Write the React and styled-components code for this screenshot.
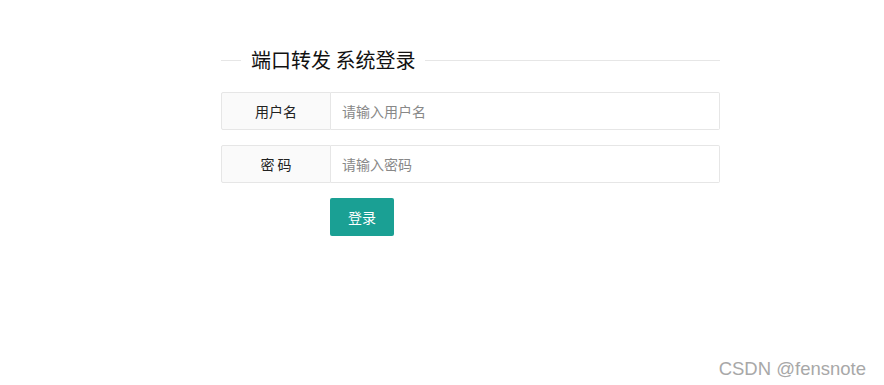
import React from 'react';
import styled, { createGlobalStyle } from 'styled-components';

const GlobalStyle = createGlobalStyle`
  html, body {
    margin: 0;
    padding: 0;
    background: #fff;
  }
  body {
    font-family: "Noto Sans CJK SC", "Liberation Sans", sans-serif;
    color: #333;
  }
`;

const Page = styled.div`
  position: relative;
  width: 884px;
  height: 385px;
  overflow: hidden;
`;

const LoginBox = styled.div`
  width: 499px;
  margin-left: 221px;
  padding-top: 45px;
`;

const Legend = styled.div`
  display: flex;
  align-items: center;
  height: 30px;
  margin-bottom: 17px;
`;

const Rule = styled.div`
  height: 1px;
  background: #e6e6e6;
  flex: ${(p) => (p.grow ? '1' : '0 0 20px')};
`;

const LegendText = styled.span`
  padding: 0 10px;
  font-size: 20px;
  font-weight: 400;
  line-height: 30px;
  color: #111;
`;

const Item = styled.div`
  display: flex;
  height: 38px;
  margin-bottom: 15px;
`;

const Label = styled.label`
  box-sizing: border-box;
  width: 110px;
  flex: 0 0 110px;
  border: 1px solid #e6e6e6;
  border-radius: 2px 0 0 2px;
  background: #fafafa;
  font-size: 14px;
  line-height: 36px;
  text-align: center;
  color: #222;
`;

const Input = styled.input`
  box-sizing: border-box;
  flex: 1;
  height: 38px;
  border: 1px solid #e6e6e6;
  border-left: none;
  border-radius: 0 2px 2px 0;
  padding-left: 11px;
  font-family: inherit;
  font-size: 14px;
  color: #333;
  outline: none;
  &::placeholder {
    color: #888;
  }
`;

const ButtonRow = styled.div`
  padding-left: 109px;
`;

const Button = styled.button`
  height: 38px;
  padding: 0 18px;
  border: none;
  border-radius: 2px;
  background: #1aa094;
  color: #fff;
  font-family: inherit;
  font-size: 14px;
  cursor: pointer;
`;

const Watermark = styled.div`
  position: absolute;
  right: 18px;
  bottom: 5px;
  font-family: "Liberation Sans", Arial, sans-serif;
  font-size: 18.5px;
  color: #a8a8a8;
`;

const App = () => (
  <Page>
    <GlobalStyle />
    <LoginBox>
      <Legend>
        <Rule />
        <LegendText>端口转发 系统登录</LegendText>
        <Rule grow />
      </Legend>
      <Item>
        <Label>用户名</Label>
        <Input type="text" placeholder="请输入用户名" />
      </Item>
      <Item>
        <Label>密 码</Label>
        <Input type="password" placeholder="请输入密码" />
      </Item>
      <ButtonRow>
        <Button>登录</Button>
      </ButtonRow>
    </LoginBox>
    <Watermark>CSDN @fensnote</Watermark>
  </Page>
);

export default App;
